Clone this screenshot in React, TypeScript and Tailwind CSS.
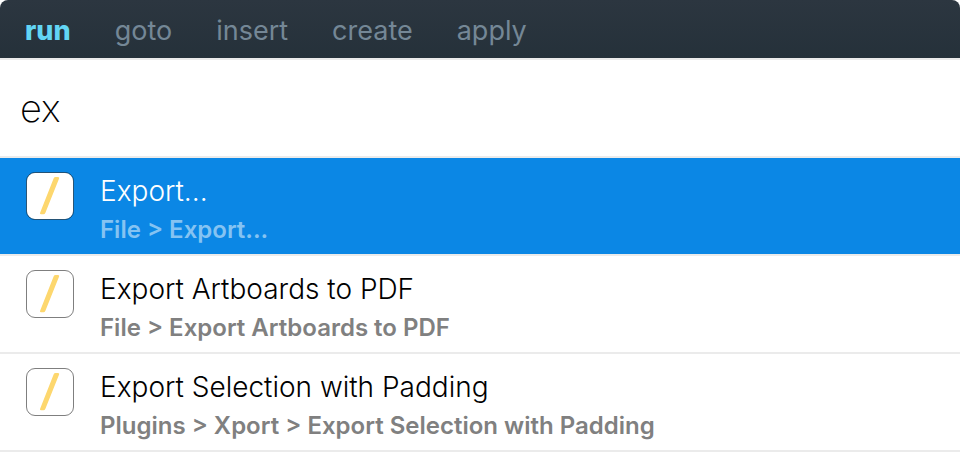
import { useState } from 'react';
import clsx from 'clsx';

const tabs = ['run', 'goto', 'insert', 'create', 'apply'];

const results = [
    { title: 'Export...', path: 'File > Export...' },
    { title: 'Export Artboards to PDF', path: 'File > Export Artboards to PDF' },
    { title: 'Export Selection with Padding', path: 'Plugins > Xport > Export Selection with Padding' },
];

const CommandIcon = () => (
    <svg width="48" height="48" viewBox="0 0 48 48" className="shrink-0" aria-hidden="true">
        <rect x="0.7" y="0.7" width="46.6" height="46.6" rx="8.3" fill="#fff" />
        <rect x="0.5" y="0.5" width="47" height="47" rx="8.5" fill="none" stroke="#000" strokeOpacity="0.5" />
        <path d="M29.6 5h2.400q1.700 0 1.100 1.500L19.400 40.800q-.6 1.500-2 1.500H15.200q-1.700 0-1.100-1.500L27.600 6.400Q28.200 5 29.600 5Z" fill="#fdd76e" />
    </svg>
);

const App = () => {

    const [activeTab, setActiveTab] = useState('run');
    const [query, setQuery] = useState('ex');
    const [selected, setSelected] = useState(0);

    return (
        <main className="bg-white font-['Inter',sans-serif]">
            <nav className="flex items-center gap-[44px] rounded-t-lg bg-linear-to-b from-[#2c3640] to-[#25313a] px-[25px] pt-[13px] pb-[9px]">
                {tabs.map((tab) => (
                    <button
                        key={tab}
                        type="button"
                        onClick={() => setActiveTab(tab)}
                        className={clsx('text-[27px] leading-9', tab === activeTab ? 'font-extrabold text-[#62d5f4]' : 'text-[#748796]')}
                    >
                        {tab}
                    </button>
                ))}
            </nav>

            <input
                type="text"
                aria-label="Command"
                value={query}
                onChange={(e) => setQuery(e.target.value)}
                className="block h-[100px] w-full border-y-2 border-[#ebebeb] px-5 text-[38px] font-extralight text-black outline-none"
            />

            <ul>
                {results.map((result, index) => (
                    <li key={result.title} className="border-b-2 border-[#ebebeb]">
                        <button
                            type="button"
                            onClick={() => setSelected(index)}
                            className={clsx('flex w-full items-start gap-[26px] px-[26px] pt-[14px] pb-1 text-left', index === selected ? 'bg-[#0b87e5]' : 'bg-white')}
                        >
                            <CommandIcon />
                            <span className="flex flex-col">
                                <span className={clsx('text-[28px] leading-[38px] font-light', index === selected ? 'text-white' : 'text-black')}>{result.title}</span>
                                <span className={clsx('text-[24px] leading-[40px] font-semibold', index === selected ? 'text-[#85c3f2]' : 'text-[#808080]')}>{result.path}</span>
                            </span>
                        </button>
                    </li>
                ))}
            </ul>
        </main>
    );
};

export default App;
